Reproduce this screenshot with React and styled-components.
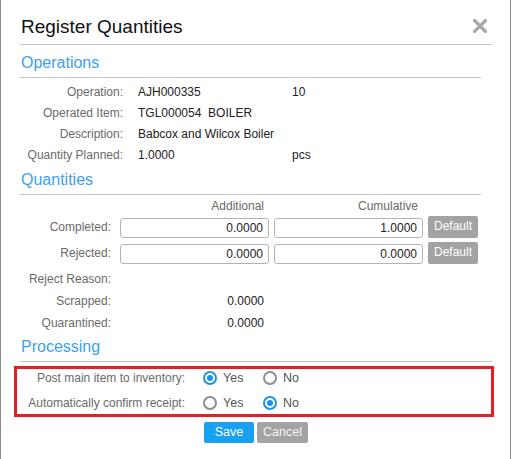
import React, { useState } from "react";
import styled, { createGlobalStyle, css } from "styled-components";

const GlobalStyle = createGlobalStyle`
  html, body {
    margin: 0;
    padding: 0;
    background: #fff;
  }
  body {
    font-family: "Liberation Sans", Arial, sans-serif;
  }
  * {
    box-sizing: border-box;
  }
`;

const Dialog = styled.div`
  width: 511px;
  height: 459px;
  padding: 0 18px 0 19px;
  background: #fff;
  border-left: 1px solid #8c8c8c;
  border-right: 1px solid #8c8c8c;
  overflow: hidden;
`;

const Header = styled.div`
  display: flex;
  align-items: flex-start;
  justify-content: space-between;
  padding: 14px 5px 4px 1px;
  border-bottom: 1px solid #c4c4c4;
`;

const Title = styled.h1`
  margin: 0;
  font-size: 19px;
  font-weight: normal;
  line-height: 26px;
  color: #111;
`;

const Close = styled.button`
  display: flex;
  margin-top: 5px;
  padding: 0;
  border: none;
  background: none;
  cursor: pointer;
`;

const Section = styled.section`
  width: ${(p) => (p.$wide ? "472px" : "461px")};
`;

const Heading = styled.h2`
  margin: ${(p) => p.$top}px 0 0;
  padding: 0 0 4px 1px;
  font-size: 16px;
  font-weight: normal;
  line-height: 20px;
  color: #3c9ff0;
  border-bottom: 1px solid #c4c4c4;
`;

const InfoGrid = styled.div`
  display: grid;
  grid-template-columns: 103px 139px 1fr;
  column-gap: 15px;
  grid-auto-rows: 21px;
  margin-top: 4px;
  font-size: 12px;
  line-height: 21px;
`;

const Label = styled.div`
  color: #6a6a6a;
  text-align: right;
  white-space: nowrap;
`;

const Value = styled.div`
  color: #222;
  white-space: pre;
`;

const QtyGrid = styled.div`
  display: grid;
  grid-template-columns: 95px 149px 149px 50px;
  column-gap: 5px;
  margin-top: 1px;
  font-size: 12px;
`;

const QtyRow = styled.div`
  display: contents;
`;

const ColHead = styled.div`
  height: 20px;
  line-height: 20px;
  padding-right: 5px;
  text-align: right;
  color: #6a6a6a;
`;

const Cell = styled.div`
  height: ${(p) => p.$h || 22}px;
  margin-top: ${(p) => p.$gap || 0}px;
  display: flex;
  align-items: ${(p) => (p.$input ? "flex-end" : "center")};
  justify-content: flex-end;
  line-height: ${(p) => p.$h || 22}px;
  color: ${(p) => (p.$label ? "#6a6a6a" : "#222")};
  padding-right: ${(p) => (p.$label ? 4 : p.$num ? 5 : 0)}px;
  white-space: nowrap;
`;

const NumInput = styled.input`
  width: 100%;
  height: 20px;
  padding: 0 5px;
  border: 1px solid #b4b4b4;
  border-radius: 3px;
  font-family: inherit;
  font-size: 12px;
  color: #222;
  text-align: right;
  outline: none;
`;

const buttonBase = css`
  height: 21px;
  border: none;
  border-radius: 2px;
  font-family: inherit;
  color: #fff;
  cursor: pointer;
  padding: 0;
`;

const DefaultButton = styled.button`
  ${buttonBase}
  width: 50px;
  height: 22px;
  font-size: 12px;
  background: #a3a3a3;
  padding-bottom: 2px;
`;

const Highlight = styled.div`
  margin: 4px -2px 0 -6px;
  padding: 0 0 2px;
  border: 3px solid #ec1c24;
  display: grid;
  grid-template-columns: 168px 1fr;
  column-gap: 18px;
  row-gap: 7px;
  font-size: 12px;
`;

const RadioLabel = styled.div`
  height: 18px;
  line-height: 18px;
  text-align: right;
  color: #6a6a6a;
  white-space: nowrap;
`;

const RadioGroup = styled.div`
  display: flex;
  align-items: center;
  height: 18px;
`;

const Option = styled.label`
  display: flex;
  align-items: center;
  gap: 6px;
  width: 60px;
  color: #555;
  font-size: 12.5px;
  cursor: pointer;
`;

const Dot = styled.span`
  width: 14px;
  height: 14px;
  border-radius: 50%;
  border: 2px solid ${(p) => (p.$on ? "#1a93e6" : "#8e8e8e")};
  display: flex;
  align-items: center;
  justify-content: center;
  &::after {
    content: "";
    width: 6px;
    height: 6px;
    border-radius: 50%;
    background: ${(p) => (p.$on ? "#1a93e6" : "transparent")};
  }
`;

const Actions = styled.div`
  display: flex;
  justify-content: center;
  gap: 3px;
  margin-top: 5px;
`;

const ActionButton = styled.button`
  ${buttonBase}
  width: ${(p) => p.$w}px;
  font-size: 12.5px;
  background: ${(p) => (p.$primary ? "#18a0f2" : "#a3a3a3")};
  color: ${(p) => (p.$primary ? "#fff" : "#f4f4f4")};
  padding-bottom: 1px;
`;

const CloseIcon = () => (
  <svg width="14" height="14" viewBox="0 0 14 14">
    <path
      d="M1.5 1.5 L12.5 12.5 M12.5 1.5 L1.5 12.5"
      stroke="#a8a8a8"
      strokeWidth="3.2"
      strokeLinecap="square"
    />
  </svg>
);

const Radio = ({ name, value, current, onPick, children }) => (
  <Option onClick={() => onPick(name, value)}>
    <Dot $on={current === value} />
    {children}
  </Option>
);

const info = [
  ["Operation:", "AJH000335", "10"],
  ["Operated Item:", "TGL000054  BOILER", ""],
  ["Description:", "Babcox and Wilcox Boiler", ""],
  ["Quantity Planned:", "1.0000", "pcs"],
];

const App = () => {
  const [qty, setQty] = useState({
    completed: ["0.0000", "1.0000"],
    rejected: ["0.0000", "0.0000"],
  });
  const [opts, setOpts] = useState({ post: "yes", confirm: "no" });

  const pick = (name, value) => setOpts((o) => ({ ...o, [name]: value }));

  const change = (row, i) => (e) => {
    const next = [...qty[row]];
    next[i] = e.target.value;
    setQty({ ...qty, [row]: next });
  };

  const resetRow = (row) => () => {
    setQty({ ...qty, [row]: [qty[row][0], row === "completed" ? "1.0000" : "0.0000"] });
  };

  return (
    <>
      <GlobalStyle />
      <Dialog>
        <Header>
          <Title>Register Quantities</Title>
          <Close aria-label="Close">
            <CloseIcon />
          </Close>
        </Header>

        <Section>
          <Heading $top={8}>Operations</Heading>
          <InfoGrid>
            {info.map(([label, value, extra]) => (
              <React.Fragment key={label}>
                <Label>{label}</Label>
                <Value>{value}</Value>
                <Value>{extra}</Value>
              </React.Fragment>
            ))}
          </InfoGrid>
        </Section>

        <Section>
          <Heading $top={4}>Quantities</Heading>
          <QtyGrid>
            <div />
            <ColHead>Additional</ColHead>
            <ColHead>Cumulative</ColHead>
            <div />

            {[
              ["completed", "Completed:", 0],
              ["rejected", "Rejected:", 4],
            ].map(([key, label, gap]) => (
              <QtyRow key={key}>
                <Cell $label $gap={gap}>{label}</Cell>
                <Cell $input $gap={gap}>
                  <NumInput value={qty[key][0]} onChange={change(key, 0)} />
                </Cell>
                <Cell $input $gap={gap}>
                  <NumInput value={qty[key][1]} onChange={change(key, 1)} />
                </Cell>
                <Cell $gap={gap}>
                  <DefaultButton onClick={resetRow(key)}>Default</DefaultButton>
                </Cell>
              </QtyRow>
            ))}

            {[
              ["Reject Reason:", "", 4],
              ["Scrapped:", "0.0000", 0],
              ["Quarantined:", "0.0000", 0],
            ].map(([label, value, gap]) => (
              <QtyRow key={label}>
                <Cell $label $gap={gap}>{label}</Cell>
                <Cell $num $gap={gap}>{value}</Cell>
                <Cell $gap={gap} />
                <Cell $gap={gap} />
              </QtyRow>
            ))}
          </QtyGrid>
        </Section>

        <Section $wide>
          <Heading $top={3}>Processing</Heading>
          <Highlight>
            <RadioLabel>Post main item to inventory:</RadioLabel>
            <RadioGroup>
              <Radio name="post" value="yes" current={opts.post} onPick={pick}>Yes</Radio>
              <Radio name="post" value="no" current={opts.post} onPick={pick}>No</Radio>
            </RadioGroup>
            <RadioLabel>Automatically confirm receipt:</RadioLabel>
            <RadioGroup>
              <Radio name="confirm" value="yes" current={opts.confirm} onPick={pick}>Yes</Radio>
              <Radio name="confirm" value="no" current={opts.confirm} onPick={pick}>No</Radio>
            </RadioGroup>
          </Highlight>
          <Actions>
            <ActionButton $primary $w={50}>Save</ActionButton>
            <ActionButton $w={51}>Cancel</ActionButton>
          </Actions>
        </Section>
      </Dialog>
    </>
  );
};

export default App;
